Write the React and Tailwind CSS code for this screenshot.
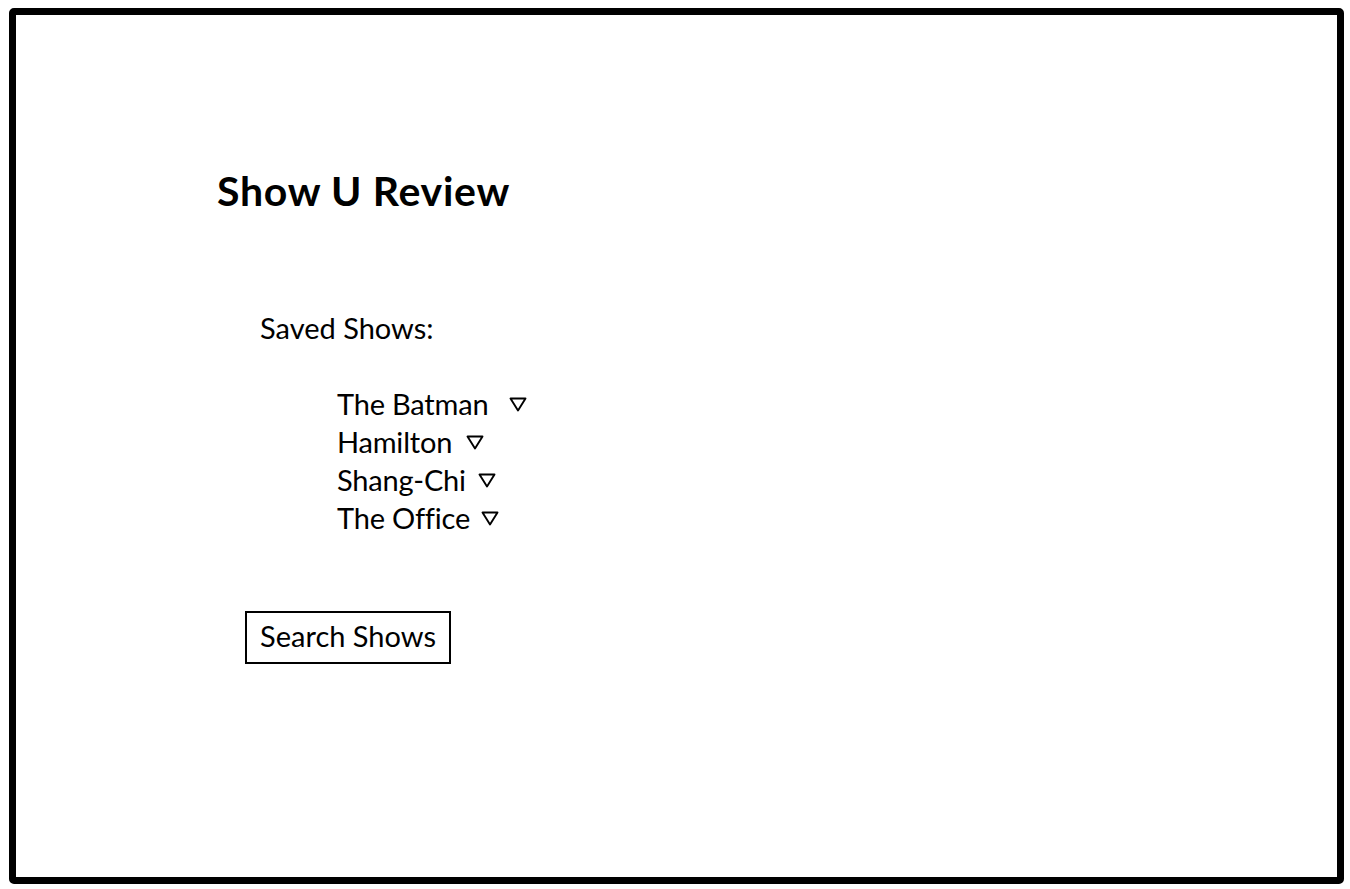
const SHOWS = [
  { name: 'The Batman', gap: 'ml-[21px]' },
  { name: 'Hamilton', gap: 'ml-[14px]' },
  { name: 'Shang-Chi', gap: 'ml-[12px]' },
  { name: 'The Office', gap: 'ml-[11px]' },
]

function Caret() {
  return (
    <svg width="18" height="15" viewBox="0 0 18 15" className="shrink-0 block">
      <path d="M1.5 1.5 L16.5 1.5 L9 13.5 Z" fill="none" stroke="black" strokeWidth="1.9" strokeLinejoin="round" />
    </svg>
  )
}

export default function App() {
  return (
    <div className="w-[1350px] h-[889px] bg-white pt-[8px] pl-[9px]" style={{ fontFamily: 'Lato, "Open Sans", sans-serif' }}>
      <div className="w-[1335px] h-[876px] border-[7px] border-black rounded-[5px] pl-[201px] pt-[151px] text-black">
        {/* Title */}
        <h1 className="text-[41px] font-bold leading-[50px] tracking-[0.7px]">Show U Review</h1>

        {/* Saved shows */}
        <p className="mt-[95px] ml-[43px] text-[29px] leading-[34px]">Saved Shows:</p>
        <ul className="mt-[40px] ml-[120px] text-[29px] tracking-[-0.2px]">
          {SHOWS.map(s => (
            <li key={s.name} className="flex items-center h-[38px]">
              <span>{s.name}</span>
              <span className={s.gap}><Caret /></span>
            </li>
          ))}
        </ul>

        <button className="mt-[74px] ml-[28px] w-[206px] h-[53px] border-2 border-black text-[29px] leading-[34px] pb-[3px] flex items-center justify-center">
          Search Shows
        </button>
      </div>
    </div>
  )
}
